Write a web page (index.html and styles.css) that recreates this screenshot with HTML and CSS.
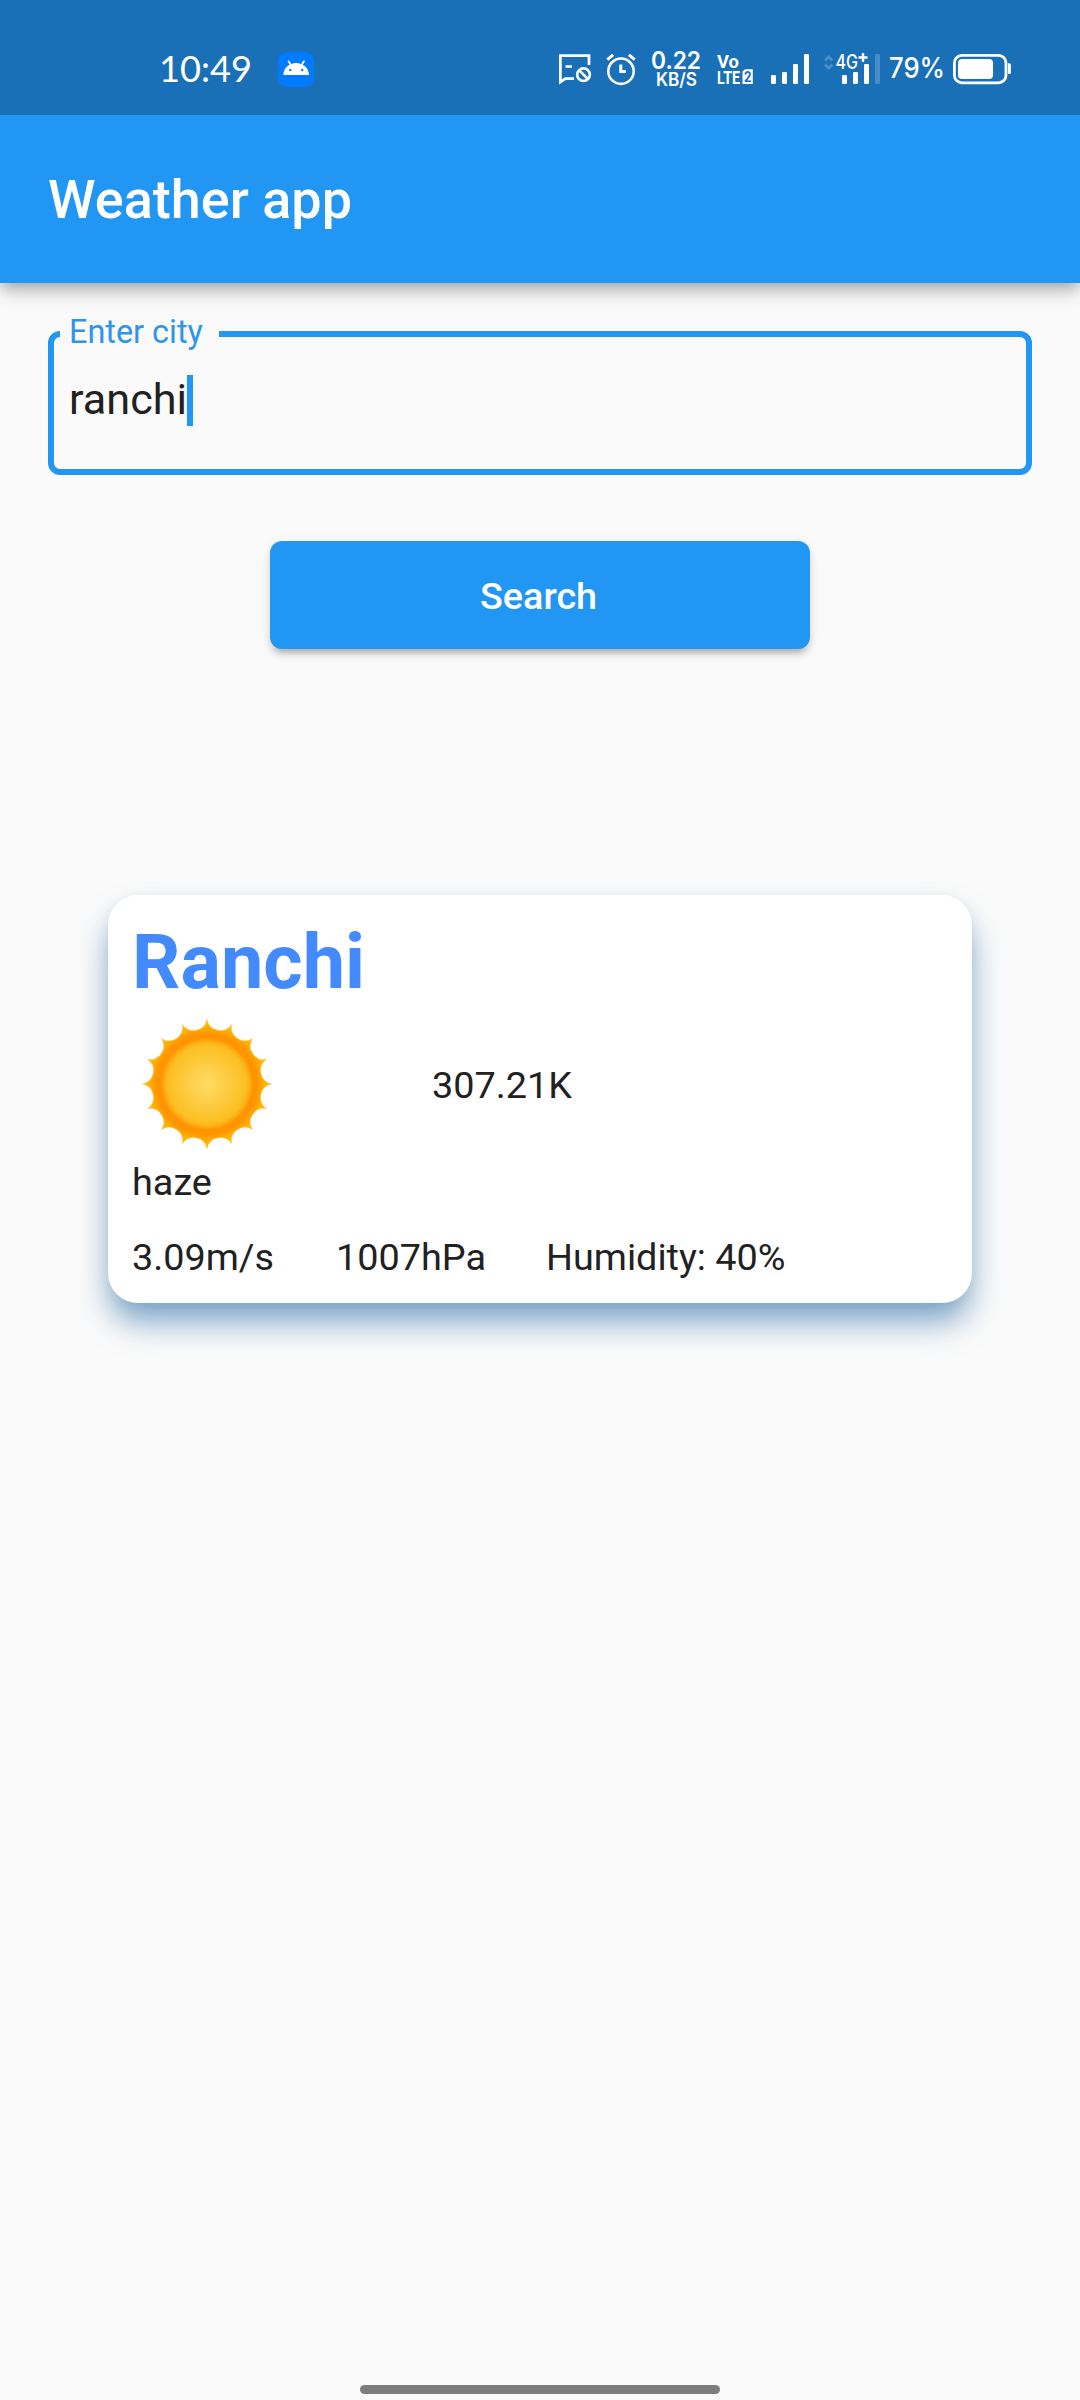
FILE: index.html
```html
<!DOCTYPE html>
<html lang="en">
<head>
<meta charset="utf-8">
<title>Weather app</title>
<link rel="stylesheet" href="styles.css">
</head>
<body>
<div class="screen">
  <div class="status-bar">
    <svg class="clock" width="94" height="40" viewBox="160 50 94 40"><text x="159" y="82" font-size="37" textLength="93" lengthAdjust="spacingAndGlyphs">10:49</text></svg>
    <svg class="app-badge" width="36" height="40" viewBox="278 50 36 40">
      <rect x="278" y="52" width="36" height="35" rx="9" fill="#007bff"/>
      <path d="M283.3 75a12.8 12 0 0 1 25.6 0z"/>
      <path d="M288.5 61.2l2.6 4M304 61.2l-2.6 4" stroke="#fff" stroke-width="1.6" stroke-linecap="round"/>
      <circle cx="290.3" cy="70" r="1.2" fill="#007bff"/><circle cx="302.2" cy="70" r="1.2" fill="#007bff"/>
    </svg>
    <div class="status-icons">
      <svg class="cast" width="34" height="40" viewBox="558 50 34 40">
        <path d="M589 65V55.6H560.4V82l5-3.3H574M565.5 66.5h6.5" fill="none" stroke="#fff" stroke-width="2.7"/>
        <circle cx="583.5" cy="74.7" r="6.3" fill="none" stroke="#fff" stroke-width="2.6"/>
        <path d="M579 70.2l9 9" stroke="#fff" stroke-width="2.6"/>
      </svg>
      <svg class="alarm" width="32" height="40" viewBox="605 50 32 40">
        <g fill="none" stroke="#fff"><circle cx="621" cy="71.2" r="12.7" stroke-width="2.6"/>
        <path d="M620.8 64.5v7h5" stroke-width="3"/><path d="M607.3 59.6l5.8-4.7M634.7 59.6l-5.8-4.7" stroke-width="3"/></g>
      </svg>
      <svg class="speed" width="50" height="40" viewBox="651 50 50 40">
        <text x="651" y="69" font-size="24" font-weight="600" textLength="50" lengthAdjust="spacingAndGlyphs">0.22</text>
        <text x="656" y="86" font-size="18" font-weight="600" textLength="41" lengthAdjust="spacingAndGlyphs">KB/S</text>
      </svg>
      <svg class="volte" width="38" height="40" viewBox="716 50 38 40">
        <text x="717" y="68" font-size="19" font-weight="700" textLength="22" lengthAdjust="spacingAndGlyphs">Vo</text>
        <text x="717" y="84" font-size="19" font-weight="700" textLength="23" lengthAdjust="spacingAndGlyphs">LTE</text>
        <path d="M742.5 71.5l2.5-2.3h7.8V84h-10.3z"/>
        <text class="sim" x="744" y="82" font-size="15" font-weight="700" textLength="7.5" lengthAdjust="spacingAndGlyphs">2</text>
      </svg>
      <svg class="signal" width="38" height="40" viewBox="771 50 38 40">
        <rect x="771" y="75" width="5" height="9" rx="1.3"/><rect x="782" y="72" width="5" height="12" rx="1.3"/><rect x="793" y="64" width="5" height="20" rx="1.3"/><rect x="804" y="54" width="5" height="30" rx="1.3"/>
      </svg>
      <svg class="mobile" width="58" height="40" viewBox="823 50 58 40">
        <path d="M825 60.5l3.7-3.7 3.7 3.7M825 64.5l3.7 3.7 3.7-3.7" fill="none" stroke="#4a8fc7" stroke-width="2.6"/>
        <text x="835.5" y="69" font-size="20" font-weight="500" textLength="22.5" lengthAdjust="spacingAndGlyphs">4G</text>
        <path d="M863 53v9M858.5 57.5h9" stroke="#fff" stroke-width="2.4"/>
        <rect x="842" y="75" width="5" height="9" rx="1.3"/><rect x="853" y="72" width="5" height="12" rx="1.3"/><rect x="864" y="64" width="5" height="20" rx="1.3"/><rect x="875" y="54" width="5" height="30" rx="1.3" fill="#468cc5"/>
      </svg>
      <svg class="percent" width="56" height="40" viewBox="889 50 56 40"><text x="889" y="78" font-size="28.5" font-weight="500" textLength="56" lengthAdjust="spacingAndGlyphs">79%</text></svg>
      <svg class="battery" width="60" height="40" viewBox="952 50 60 40">
        <rect x="954.4" y="55.4" width="51.6" height="27.4" rx="7.5" fill="none" stroke="#fff" stroke-width="2.8"/>
        <rect x="958" y="59" width="35" height="20" rx="4"/><path d="M1008 63.3h1.3q1.6 0 1.6 1.6v7.5q0 1.6-1.6 1.6h-1.3z"/>
      </svg>
    </div>
  </div>
  <header class="app-bar"><h1 class="title">Weather app</h1></header>
  <main class="content">
    <fieldset class="field">
      <legend class="label">Enter city</legend>
      <div class="value">ranchi<span class="caret"></span></div>
    </fieldset>
    <button class="search" type="button">Search</button>
    <section class="card">
      <h2 class="city">Ranchi</h2>
      <div class="now">
        <svg class="sun" width="150" height="150" viewBox="-75 -75 150 150">
          <defs>
            <radialGradient id="rays" gradientUnits="userSpaceOnUse" cx="0" cy="0" r="65">
              <stop offset="0" stop-color="#ffdb66"/><stop offset=".6" stop-color="#fcbf22"/><stop offset=".65" stop-color="#fdb116"/><stop offset=".71" stop-color="#ff9302"/><stop offset=".77" stop-color="#ff9400"/><stop offset=".86" stop-color="#ffac00"/><stop offset="1" stop-color="#ffc229"/>
            </radialGradient>
          </defs>
          <path class="sun-shape" fill="url(#rays)" stroke="#ffc640" stroke-opacity=".5" stroke-width="1"/>
        </svg>
        <span class="temp">307.21K</span>
      </div>
      <div class="sky">haze</div>
      <div class="details"><span class="wind">3.09m/s</span><span class="pressure">1007hPa</span><span>Humidity: 40%</span></div>
    </section>
  </main>
  <div class="nav-bar"><div class="nav-handle"></div></div>
</div>
<script src="sun.js"></script>
</body>
</html>
```
FILE: sun.js
```js
// Sixteen sharp rays joined by scalloped arcs.
const points = Array.from({ length: 17 }, (_, i) => {
  const a = (i * Math.PI) / 8;
  return `${(64.5 * Math.sin(a)).toFixed(2)} ${(-64.5 * Math.cos(a)).toFixed(2)}`;
});
document.querySelector('.sun-shape').setAttribute(
  'd',
  `M${points[0]}` + points.slice(1).map((p) => `A13.6 13.6 0 0 0 ${p}`).join('') + 'Z'
);
```
FILE: styles.css
```css
* { box-sizing: border-box; }
body { margin: 0; background: #fafafa; color: #212121; font-family: Roboto, sans-serif; }
.screen { height: 2400px; display: flex; flex-direction: column; }
svg { display: block; flex: none; overflow: visible; }

.status-bar { position: relative; z-index: 1; flex: none; height: 115px; padding: 50px 68px 0 160px; display: flex; background: #1a70b7; }
.status-bar svg { fill: #fff; }
.clock text { font-family: Lato, sans-serif; }
.status-bar .volte text { font-family: Roboto, sans-serif; }
.status-bar .mobile text, .status-bar .percent text, .status-bar .speed text { font-family: Inter, sans-serif; }
.status-bar .sim { fill: #1a70b7; }
.app-badge { margin-left: 24px; }
.status-icons { display: flex; margin-left: auto; }
.alarm { margin-left: 13px; }
.speed { margin-left: 14px; }
.volte { margin-left: 15px; }
.signal { margin-left: 17px; }
.mobile { margin-left: 14px; }
.percent { margin-left: 8px; }
.battery { margin-left: 7px; }

.app-bar {
  flex: none; height: 168px; padding: 1px 48px 0; display: flex; align-items: center; background: #2196f3;
  box-shadow: 0 6px 12px -3px rgba(0,0,0,.2), 0 12px 15px 0 rgba(0,0,0,.12), 0 3px 24px 0 rgba(0,0,0,.08);
}
.title { margin: 0; color: #fff; font-size: 54px; font-weight: 500; line-height: 64px; }

.content { flex: 1; display: flex; flex-direction: column; align-items: center; padding: 32px 48px 0; }
.field { width: 100%; height: 160px; margin: 0; padding: 0 6px; border: 6px solid #2196f3; border-radius: 12px; }
.label { width: 159px; padding: 0 0 4px 9px; font-size: 32.4px; line-height: 34px; color: #2f95e6; white-space: nowrap; }
.value { height: 51px; margin: 21px 0 0 9px; display: flex; align-items: center; font-size: 43.2px; line-height: 51px; }
.caret { width: 6px; height: 51px; margin: 2px 0 0; background: #2196f3; }

.search {
  width: 540px; height: 108px; margin-top: 66px; padding: 1px 3px 0 0; border: 0; border-radius: 12px;
  background: #2196f3; color: #fff; font: 500 37.8px Roboto, sans-serif;
  box-shadow: 0 9px 4px -6px rgba(0,0,0,.14), 0 6px 6px 0 rgba(0,0,0,.12), 0 3px 13px 0 rgba(0,0,0,.08);
}

.card {
  width: 864px; height: 408px; margin-top: 246px; padding: 23px 24px 25px; border-radius: 30px; background: #fff;
  font-size: 37.8px; line-height: 42px;
  box-shadow: 0 21px 32px -3px rgba(40,108,165,.62), 0 2px 14px rgba(0,0,0,.05);
}
.city { margin: 0; color: #448aff; font-size: 75.6px; line-height: 88px; font-weight: 700; }
.now { height: 155px; display: flex; align-items: center; }
.temp { margin: 2px 0 0 150px; }
.details { margin-top: 33px; display: flex; }
.pressure { margin: 0 60px 0 62px; }

.nav-bar { flex: none; height: 15px; display: flex; justify-content: center; }
.nav-handle { width: 360px; height: 9px; border-radius: 4.5px; background: #7d7d7d; }
```
